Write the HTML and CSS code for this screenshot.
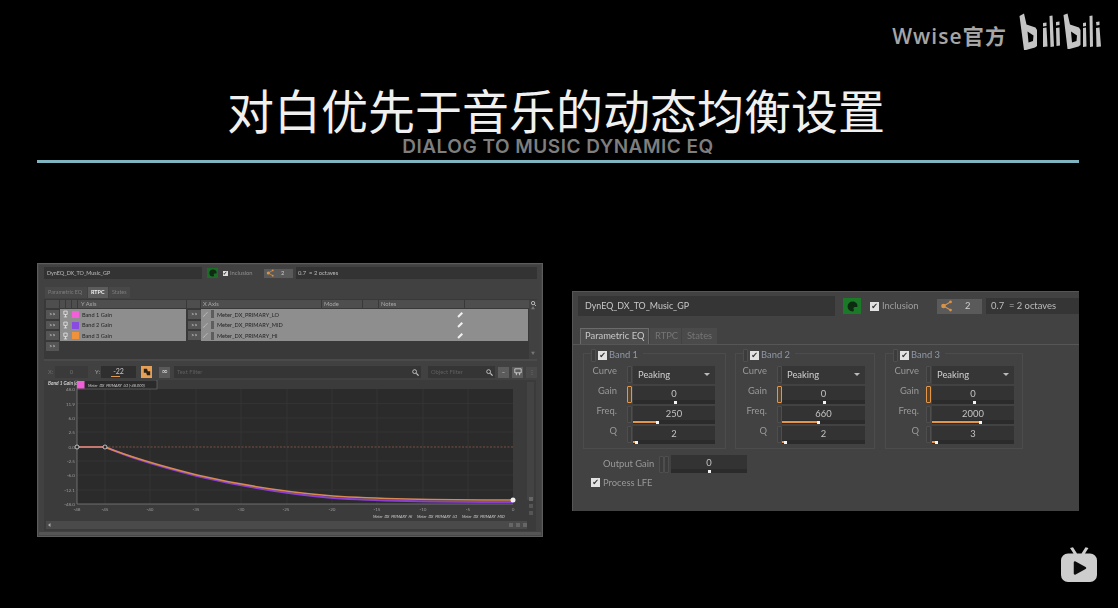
FILE: index.html
```html
<!DOCTYPE html>
<html lang="zh">
<head>
<meta charset="utf-8">
<title>对白优先于音乐的动态均衡设置</title>
<link rel="stylesheet" href="styles.css">
</head>
<body>
<main class="slide">
  <header class="brand">
    <span class="brand-name">Wwise官方</span>
    <svg class="bili" viewBox="1019 13 82 37" width="82" height="37" aria-label="bilibili">
      <g fill="#c4c4c4" fill-rule="evenodd">
        <path d="M1019.500 16l4.500-2.500 2.500 11 9 3 1.500 2.500v16l-2 1.500-9 2.500-2 0zM1027.500 31.500l1 11 4.500-1.500 .5-5.500z"/>
        <path d="M1043 23l3.500-.5v3.500l-3.500 .5zM1043 28l3.500-.5 1 19-4.500 .5z"/>
        <path d="M1049.500 16l3-.5 1.500 31-3.500 .5z"/>
        <path d="M1056 22l3.500-.5v3.500l-3.500 .5zM1056 28l3.500-.5 .5 18-3.500 .5z"/>
        <path d="M1063.500 15l4-1.500 2.500 11 9 3 1.500 2.500v15l-2 1.500-9 2.500-2 0zM1071 31.500l1 11 4.500-1.500 .5-5.500z"/>
        <path d="M1083 23l3-.5v3.500l-3 .5zM1083 28l3-.5 .5 19-3.500 .5z"/>
        <path d="M1089.500 16l3-.5 .5 31-3 .5z"/>
        <path d="M1096 22l3.500-.5v3.500l-3 .5zM1096 28l3.500-.5 1.500 19-4.500 .5z"/>
      </g>
    </svg>
  </header>
  <h1 class="title">对白优先于音乐的动态均衡设置</h1>
  <p class="subtitle">DIALOG TO MUSIC DYNAMIC EQ</p>
  <div class="rule"></div>

  <div class="shots">
    <!-- Left: RTPC window -->
    <section class="win win-rtpc">
      <div class="top-a">
        <div class="name-a">DynEQ_DX_TO_Music_GP</div>
        <span class="green-a"><svg viewBox="0 0 10 10" width="8" height="8"><path fill="#0d2b10" d="M5 .5a4.500 4.500 0 1 0 0 9c1.500 0 1.500-1.500 1-2.200-.5-1 .3-1.800 1.300-1.800H9c.5 0 .5-.5.5-1C9.500 2 7.500 .5 5 .5z"/></svg></span>
        <span class="check-a">✔</span><span class="incl-a">Inclusion</span>
        <span class="share-a"><svg viewBox="0 0 12 10" width="9" height="8"><path fill="none" stroke="#d9924a" d="M9 1.500 3 5l6 3.500"/><circle cx="3" cy="5" r="2" fill="#d9924a"/><circle cx="9" cy="1.500" r="1.200" fill="#d9924a"/><circle cx="9" cy="8.500" r="1.200" fill="#d9924a"/></svg><b>2</b></span>
        <div class="oct-a">0.7 &nbsp;= 2 octaves</div>
      </div>
      <nav class="tabs-a">
        <span>Parametric EQ</span><span class="on">RTPC</span><span>States</span>
      </nav>
      <div class="table-wrap">
        <div class="tbl">
          <div class="thead">
            <i class="c16"></i><i class="c5"></i><i class="c5"></i><i class="c6"></i><i class="c-y">Y Axis</i>
            <i class="c-gap"></i><i class="c-x">X Axis</i><i class="c-mode">Mode</i><i class="c-s"></i><i class="c-notes">Notes</i><i class="c-end"></i>
          </div>
          <div class="trow">
            <span class="go">&gt;&gt;</span>
            <div class="lt lt-y"><svg class="mic" viewBox="0 0 6 9" width="5" height="8"><path fill="none" stroke="#e4e4e4" d="M1 1h4v4H1zM3 5v3M1 8h4"/></svg><span class="sq s-pink"></span><span>Band 1 Gain</span></div>
            <span class="go go-x">&gt;&gt;</span>
            <div class="lt lt-x"><svg class="knob" viewBox="0 0 12 8" width="8" height="7"><path fill="none" stroke="#d8d8d8" stroke-width=".8" d="M0 7c3 0 3-5 7-6"/></svg><span class="bar"></span><span>Meter_DX_PRIMARY_LO</span><span class="pen"></span></div>
          </div>
          <div class="trow">
            <span class="go">&gt;&gt;</span>
            <div class="lt lt-y"><svg class="mic" viewBox="0 0 6 9" width="5" height="8"><path fill="none" stroke="#e4e4e4" d="M1 1h4v4H1zM3 5v3M1 8h4"/></svg><span class="sq s-violet"></span><span>Band 2 Gain</span></div>
            <span class="go go-x">&gt;&gt;</span>
            <div class="lt lt-x"><svg class="knob" viewBox="0 0 12 8" width="8" height="7"><path fill="none" stroke="#d8d8d8" stroke-width=".8" d="M0 7c3 0 3-5 7-6"/></svg><span class="bar"></span><span>Meter_DX_PRIMARY_MID</span><span class="pen"></span></div>
          </div>
          <div class="trow">
            <span class="go">&gt;&gt;</span>
            <div class="lt lt-y"><svg class="mic" viewBox="0 0 6 9" width="5" height="8"><path fill="none" stroke="#e4e4e4" d="M1 1h4v4H1zM3 5v3M1 8h4"/></svg><span class="sq s-orange"></span><span>Band 3 Gain</span></div>
            <span class="go go-x">&gt;&gt;</span>
            <div class="lt lt-x"><svg class="knob" viewBox="0 0 12 8" width="8" height="7"><path fill="none" stroke="#d8d8d8" stroke-width=".8" d="M0 7c3 0 3-5 7-6"/></svg><span class="bar"></span><span>Meter_DX_PRIMARY_HI</span><span class="pen"></span></div>
          </div>
          <div class="trow"><span class="go">&gt;&gt;</span></div>
        </div>
        <div class="vscroll"><svg viewBox="0 0 6 6" width="5" height="5"><circle cx="2.500" cy="2.500" r="2" fill="none" stroke="#ccc"/><path stroke="#ccc" d="M4 4l2 2"/></svg><span>▲</span><span class="push">▼</span></div>
      </div>
      <div class="tools">
        <span class="lbl-x">X:</span>
        <span class="in in-x">0</span>
        <span class="lbl-y">Y:</span>
        <span class="in in-y">-22<em></em></span>
        <span class="btn-or"><svg viewBox="0 0 10 10" width="8" height="8"><path fill="#2a2216" d="M1 1h4l1 3h3v5H5L4 6H1z"/></svg></span>
        <span class="btn-link">∞</span>
        <span class="filter f-text">Text Filter<svg viewBox="0 0 8 8" width="7" height="7"><circle cx="3" cy="3" r="2.200" fill="none" stroke="#ccc"/><path stroke="#ccc" stroke-width="1.400" d="M5 5l2.500 2.500"/></svg></span>
        <span class="filter f-obj">Object Filter<svg viewBox="0 0 8 8" width="7" height="7"><circle cx="3" cy="3" r="2.200" fill="none" stroke="#ccc"/><path stroke="#ccc" stroke-width="1.400" d="M5 5l2.500 2.500"/></svg></span>
        <span class="sbtn">–</span><span class="sbtn"><svg viewBox="0 0 10 10" width="8" height="8"><path fill="none" stroke="#ddd" d="M1 1h8v5H1zM3 6v3M7 6v3"/></svg></span><span class="sbtn dim">⋮</span>
      </div>
      <svg class="graph" viewBox="44 380 492 151" width="492" height="151">
        <rect x="44" y="380" width="492" height="151" fill="#3b3b3b"/>
        <rect x="77" y="389" width="436" height="115" fill="#2b2b2b"/>
        <g stroke="#373737" stroke-width=".7">
          <path d="M105 389v115M150 389v115M196 389v115M241 389v115M287 389v115M332 389v115M377 389v115M423 389v115M468 389v115"/>
          <path d="M77 403.500h436M77 418h436M77 432h436M77 461h436M77 475h436M77 490h436"/>
        </g>
        <path d="M77 389v115h436" fill="none" stroke="#888" stroke-width=".7"/>
        <path d="M105 447h408" stroke="#8d5a48" stroke-width=".8" stroke-dasharray="2 1.500" fill="none"/>
        <path d="M77 447h28C125 455 145 463 197 476 240 486 285 494 333 498 377 501 440 502 513 502" fill="none" stroke="#8a3fd0" stroke-width="2"/>
        <path d="M77 447h28C125 455 145 462 197 475 240 485 285 492 333 496 377 499 440 500 513 500" fill="none" stroke="#d98a50" stroke-width="1.600"/>
        <g fill="#2b2b2b" stroke="#ddd" stroke-width=".8"><circle cx="77" cy="447" r="2"/><circle cx="105" cy="447" r="2"/></g>
        <circle cx="513" cy="500" r="2.500" fill="#f0f0f0"/>
        <g class="axis-y" text-anchor="end">
          <text x="75" y="391">48.0</text><text x="75" y="405.500">11.9</text><text x="75" y="420">6.0</text><text x="75" y="434">2.5</text><text x="75" y="449">0.0</text><text x="75" y="463">-2.5</text><text x="75" y="477">-6.0</text><text x="75" y="492">-12.1</text><text x="75" y="506">-48.0</text>
        </g>
        <g class="axis-x" text-anchor="middle">
          <text x="77" y="511">-48</text><text x="105" y="511">-45</text><text x="150" y="511">-40</text><text x="196" y="511">-35</text><text x="241" y="511">-30</text><text x="286" y="511">-25</text><text x="332" y="511">-20</text><text x="377" y="511">-15</text><text x="423" y="511">-10</text><text x="468" y="511">-5</text><text x="513" y="511">0</text>
        </g>
        <g class="axis-m">
          <text x="373" y="518">Meter_DX_PRIMARY_HI</text><text x="417" y="518">Meter_DX_PRIMARY_LO</text><text x="462" y="518">Meter_DX_PRIMARY_MID</text>
        </g>
        <text class="axis-t" x="48" y="385">Band 1 Gain (dB)</text>
        <rect x="77" y="380" width="80" height="9" fill="#2b2b2b" stroke="#777" stroke-width=".6"/>
        <rect x="77" y="381" width="7.500" height="7.500" fill="#f05fd8"/>
        <text class="axis-m" x="88" y="387">Meter_DX_PRIMARY_LO (-48.000)</text>
        <g fill="#555"><rect x="527" y="382" width="7" height="118" fill="#434343"/><rect x="529" y="497" width="4" height="4" fill="#666"/><rect x="529" y="504" width="4" height="4"/><rect x="529" y="511" width="4" height="4"/></g>
        <rect x="46" y="521" width="481" height="8" fill="#4a4a4a"/>
        <path d="M48 525l2.500-2v4z" fill="#aaa"/>
        <g fill="#666"><rect x="509" y="523" width="4" height="4"/><rect x="516" y="523" width="4" height="4"/><rect x="523" y="523" width="4" height="4"/></g>
      </svg>
    </section>

    <!-- Right: Parametric EQ window -->
    <section class="win win-eq">
      <div class="top-b">
        <div class="name-b">DynEQ_DX_TO_Music_GP</div>
        <span class="green-b"><svg viewBox="0 0 10 10" width="11" height="11"><path fill="#0d2b10" d="M5 .5a4.500 4.500 0 1 0 0 9c1.500 0 1.500-1.500 1-2.200-.5-1 .3-1.800 1.300-1.800H9c.5 0 .5-.5.5-1C9.500 2 7.500 .5 5 .5z"/></svg></span>
        <span class="check">✔</span><span class="incl-b">Inclusion</span>
        <span class="share-b"><svg viewBox="0 0 12 10" width="14" height="12"><path fill="none" stroke="#d9924a" d="M9 1.500 3 5l6 3.500"/><circle cx="3" cy="5" r="2" fill="#d9924a"/><circle cx="9" cy="1.500" r="1.200" fill="#d9924a"/><circle cx="9" cy="8.500" r="1.200" fill="#d9924a"/></svg><b>2</b></span>
        <div class="oct-b">0.7 &nbsp;= 2 octaves</div>
      </div>
      <nav class="tabs-b">
        <span class="on">Parametric EQ</span><span>RTPC</span><span>States</span>
      </nav>
      <div class="pane">
        <div class="bands">
          <div class="band b1">
            <div class="band-head"><span class="grip"></span><span class="check">✔</span><span>Band 1</span></div>
            <div class="brow"><label>Curve</label><span class="grip"></span><div class="ctl sel"><span>Peaking</span><i class="caret"></i></div></div>
            <div class="brow"><label>Gain</label><span class="grip hot"></span><div class="ctl"><span>0</span><div class="track"><u class="dot mid"></u></div></div></div>
            <div class="brow"><label>Freq.</label><span class="grip"></span><div class="ctl"><span>250</span><div class="track"><s class="fill w28"></s><u class="dot"></u></div></div></div>
            <div class="brow"><label>Q</label><span class="grip"></span><div class="ctl"><span>2</span><div class="track"><s class="fill w2"></s><u class="dot"></u></div></div></div>
          </div>
          <div class="band b2">
            <div class="band-head"><span class="grip"></span><span class="check">✔</span><span>Band 2</span></div>
            <div class="brow"><label>Curve</label><span class="grip"></span><div class="ctl sel"><span>Peaking</span><i class="caret"></i></div></div>
            <div class="brow"><label>Gain</label><span class="grip hot"></span><div class="ctl"><span>0</span><div class="track"><u class="dot mid"></u></div></div></div>
            <div class="brow"><label>Freq.</label><span class="grip"></span><div class="ctl"><span>660</span><div class="track"><s class="fill w43"></s><u class="dot"></u></div></div></div>
            <div class="brow"><label>Q</label><span class="grip"></span><div class="ctl"><span>2</span><div class="track"><s class="fill w2"></s><u class="dot"></u></div></div></div>
          </div>
          <div class="band b3">
            <div class="band-head"><span class="grip"></span><span class="check">✔</span><span>Band 3</span></div>
            <div class="brow"><label>Curve</label><span class="grip"></span><div class="ctl sel"><span>Peaking</span><i class="caret"></i></div></div>
            <div class="brow"><label>Gain</label><span class="grip hot"></span><div class="ctl"><span>0</span><div class="track"><u class="dot mid"></u></div></div></div>
            <div class="brow"><label>Freq.</label><span class="grip"></span><div class="ctl"><span>2000</span><div class="track"><s class="fill w57"></s><u class="dot"></u></div></div></div>
            <div class="brow"><label>Q</label><span class="grip"></span><div class="ctl"><span>3</span><div class="track"><s class="fill w3"></s><u class="dot"></u></div></div></div>
          </div>
        </div>
        <div class="out-row">
          <label>Output Gain</label><span class="grip"></span><span class="grip"></span>
          <div class="ctl"><span>0</span><div class="track"><u class="dot mid"></u></div></div>
        </div>
        <div class="lfe-row"><span class="check">✔</span><span>Process LFE</span></div>
      </div>
    </section>
  </div>

  <svg class="tv" viewBox="0 0 38 36" width="38" height="36">
    <path fill="#cdcdcd" d="M10 1l3-.8 4 6.300h4.500l4-6.300 3 .8-3.500 5.500H30a7 7 0 0 1 7 7V28a7 7 0 0 1-7 7H8a7 7 0 0 1-7-7V13.500a7 7 0 0 1 7-7h5.500z"/>
    <path fill="#0c0c0c" stroke="#0c0c0c" stroke-width="2.500" stroke-linejoin="round" d="M15 15.500l10 5.500-10 5.500z"/>
  </svg>
</main>
</body>
</html>
```
FILE: styles.css
```css
* { box-sizing: border-box; }
html, body { margin: 0; padding: 0; background: #000; }
body { width: 1118px; height: 608px; overflow: hidden; font-family: Lato, "Noto Sans CJK SC", sans-serif; }
.slide { position: relative; width: 1118px; height: 608px; padding: 13px 39px 0 37px; display: flex; flex-direction: column; }

.brand { height: 37px; margin-right: -22px; display: flex; justify-content: flex-end; align-items: center; gap: 12px; }
.brand-name { font: 600 21px/37px "Open Sans", "Noto Sans CJK SC", sans-serif; letter-spacing: 1.100px; color: #a6a6a6; margin-top: 9px; }
.bili { display: block; }
.title { margin: 31px 4px 0 0; text-align: center; font: 400 47px/56px "Noto Sans CJK SC", sans-serif; color: #f0f0f0; height: 56px; }
.subtitle { margin: -2px 0 0; height: 24px; text-align: center; font: 600 19px/24px Inter, sans-serif; color: #7e7e7e; letter-spacing: .5px; white-space: nowrap; }
.rule { height: 3px; margin-top: 1px; background: #7fb4c0; }

.shots { display: flex; align-items: flex-start; gap: 29px; margin-top: 100px; }
.win { filter: blur(.45px); color: #bbb; }

/* ---------- Left window ---------- */
.win-rtpc { width: 506px; height: 274px; background: #414141; border: 1px solid #5c5c5c; box-shadow: inset 0 0 0 1px #474747, inset 0 -4px 0 #555; padding: 3px 5px 0 6px; font-size: 5.800px; line-height: 1; }
.top-a { display: flex; align-items: center; height: 12px; }
.name-a { width: 158px; height: 12px; background: #333; color: #bdbdbd; line-height: 12px; padding-left: 3px; font-size: 5.400px; }
.green-a { width: 11px; height: 10px; margin-left: 5px; background: #1c6b26; display: flex; align-items: center; justify-content: center; }
.check-a { width: 5px; height: 5px; margin-left: 5px; background: #ddd; color: #333; font: 5px/5px "DejaVu Sans", sans-serif; }
.incl-a { margin-left: 2px; width: 34px; color: #8f8f8f; }
.share-a { width: 29px; height: 9px; background: #5a5a5a; display: flex; align-items: center; gap: 6px; padding-left: 2px; color: #ccc; }
.share-a b { font-weight: 400; }
.oct-a { flex: 1; height: 12px; margin-left: 3px; background: #333; line-height: 12px; padding-left: 2px; }

.tabs-a { display: flex; height: 11px; margin-top: 8px; margin-left: 1px; color: #7e7e7e; font-size: 5.400px; }
.tabs-a span { padding: 0 3px; line-height: 11px; background: #484848; margin-right: 1px; white-space: nowrap; }
.tabs-a span:first-child { width: 42px; }
.tabs-a .on { background: #5c5c5c; color: #f0f0f0; font-weight: 700; width: 20px; }
.tabs-a span:last-child { width: 21px; }

.table-wrap { display: flex; height: 62px; margin-top: 1px; padding-top: 1px; background: #393939; border-bottom: 2px solid #4a4a4a; }
.tbl { flex: 1; padding-left: 2px; }
.thead { display: flex; height: 8px; gap: 1px; margin-bottom: 1px; }
.thead i { font-style: normal; background: #4e4e4e; line-height: 8px; color: #a8a8a8; padding-left: 2px; }
.c16 { width: 13px; } .c5 { width: 5px; } .c6 { width: 5px; }
.thead .c-y { width: 108px; padding-left: 3px; }
.c-gap { width: 13px; }
.c-x { width: 120px; }
.c-mode { width: 40px; } .c-s { width: 15px; } .c-notes { width: 85px; } .c-end { flex: 1; }
.trow { display: grid; grid-template-columns: 14px 126px 15px 327px; height: 10.700px; align-items: stretch; color: #242424; }
.go { width: 13px; height: 8.500px; background: #555; color: #ddd; font-size: 5px; line-height: 8.500px; text-align: center; letter-spacing: .3px; margin-top: 1px; }
.go-x { margin-left: 2px; }
.lt { background: #8e8e8e; display: flex; align-items: center; white-space: nowrap; font-size: 5.600px; }
.lt-y { padding-left: 3px; }
.lt-x { padding-left: 2px; }
.sq { width: 7px; height: 7px; margin: 0 3px 0 4px; }
.s-pink { background: #f25fd9; } .s-violet { background: #8a4be0; } .s-orange { background: #f0923c; }
.bar { width: 3px; height: 8px; background: #5d5d5d; margin: 0 3px 0 0; }
.pen { margin-left: auto; margin-right: 65px; width: 6px; height: 1.500px; background: #f0f0f0; transform: rotate(-45deg); }
.vscroll { width: 8px; background: #414141; display: flex; flex-direction: column; align-items: center; gap: 1px; font-size: 4px; color: #777; padding: 1px 0 3px; }
.vscroll .push { margin-top: auto; }

.tools { display: flex; align-items: center; height: 12px; margin-top: 5px; color: #6f6f6f; }
.lbl-x { width: 5px; margin-left: 4px; }
.in { height: 12px; background: #3a3a3a; text-align: center; line-height: 11px; position: relative; }
.in-x { width: 33px; margin-left: 2px; }
.lbl-y { margin-left: 7px; width: 6px; color: #aaa; }
.in-y { width: 35px; background: #2f2f2f; color: #c5c5c5; font-size: 7px; }
.in-y em { position: absolute; left: 10px; bottom: 1px; width: 9px; height: 1px; background: #e09a50; }
.btn-or { width: 11px; height: 12px; margin-left: 5px; background: #e6a055; display: flex; align-items: center; justify-content: center; }
.btn-link { width: 11px; height: 11px; margin-left: 7px; background: #5a5a5a; color: #ddd; text-align: center; font: 8px/10px "DejaVu Sans", sans-serif; }
.filter { height: 12px; background: #353535; display: flex; align-items: center; justify-content: space-between; padding: 0 2px 0 3px; color: #5f5f5f; }
.f-text { width: 247px; margin-left: 4px; }
.f-obj { width: 67px; margin-left: 7px; }
.sbtn { width: 11px; height: 11px; margin-left: 3px; background: #5c5c5c; color: #ddd; display: flex; align-items: center; justify-content: center; }
.sbtn.dim { background: #4a4a4a; color: #777; }

.graph { display: block; margin-top: 2px; }
.graph text { font-family: Lato, sans-serif; }
.axis-y, .axis-x { font-size: 4.600px; fill: #9a9a9a; }
.axis-m { font-size: 3.900px; fill: #cfcfcf; font-style: italic; }
.axis-t { font-size: 4.800px; fill: #cfcfcf; font-style: italic; font-weight: 700; }

/* ---------- Right window ---------- */
.win-eq { width: 507px; height: 220px; margin-top: 28px; background: #424242; border-top: 1px solid #565656; border-left: 1px solid #565656; padding: 4px 0 0 5px; font-size: 9.400px; line-height: 1; }
.top-b { display: flex; align-items: center; height: 20px; }
.name-b { width: 257px; height: 20px; background: #353535; color: #c8c8c8; padding-left: 7px; line-height: 20px; font-size: 8.900px; }
.green-b { width: 18px; height: 16px; margin-left: 8px; background: #1a7a28; display: flex; align-items: center; justify-content: center; }
.check { width: 9px; height: 9px; background: #e2e2e2; color: #333; font: 8px/9px "DejaVu Sans", sans-serif; text-align: center; flex: none; display: inline-block; }
.top-b .check { margin-left: 9px; }
.incl-b { margin-left: 3px; width: 55px; color: #9e9e9e; }
.share-b { width: 45px; height: 15px; background: #5a5a5a; display: flex; align-items: center; gap: 11px; padding-left: 3px; color: #d0d0d0; }
.share-b b { font-weight: 400; }
.oct-b { flex: 1; height: 16px; margin-left: 4px; background: #353535; line-height: 16px; padding-left: 5px; color: #bdbdbd; }

.tabs-b { display: flex; height: 16px; margin-top: 12px; margin-left: 2px; color: #767676; }
.tabs-b span { padding: 0 5px; line-height: 16px; background: #4a4a4a; margin-right: 1px; white-space: nowrap; }
.tabs-b span:nth-child(2) { width: 31px; }
.tabs-b span:nth-child(3) { width: 35px; }
.tabs-b .on { width: 69px; background: #4d4d4d; box-shadow: inset 0 1px 0 #6b6b6b, inset 1px 0 0 #6b6b6b, inset -1px 0 0 #6b6b6b; color: #c8c8c8; }
.pane { border-top: 1px solid #565656; margin-left: -5px; padding: 8px 0 0 10px; }
.bands { display: flex; }
.band { height: 96px; border: 1px solid #4c4c4c; }
.b1 { width: 143px; margin-right: 9px; }
.b2 { width: 140px; margin-right: 10px; }
.b3 { width: 138px; }
.band-head { display: flex; align-items: center; gap: 2px; height: 12px; margin: -5px 0 0 7px; width: max-content; background: #424242; padding-right: 5px; color: #8f98a8; }
.band-head .grip { height: 13px; }
.band-head + .brow { margin-top: 5px; }
.brow { display: grid; grid-template-columns: 33px 16px 82px; align-items: start; height: 18px; margin-top: 2px; }
.brow label { text-align: right; color: #999; line-height: 10px; }
.brow .grip { margin-left: 10px; }
.b2 .brow { grid-template-columns: 31px 15px 83px; }
.b3 .brow { grid-template-columns: 33px 13px 82px; }
.b3 .brow .grip { margin-left: 7px; }
.grip { width: 5px; height: 17px; border: 1px solid #4e4e4e; border-radius: 1px; background: #3c3c3c; display: block; flex: none; }
.grip.hot { border-color: #e2964a; background: #58432d; border-width: 1.500px; }
.ctl { position: relative; height: 18px; background: #333; color: #c4c4c4; text-align: center; line-height: 15px; }
.sel { display: flex; justify-content: space-between; align-items: center; padding: 0 5px 2px; background: #363636; color: #d0d0d0; }
.caret { width: 0; height: 0; border: 3px solid transparent; border-top: 3px solid #bbb; margin-top: 3px; }
.track { position: absolute; left: 0; right: 0; bottom: 0; height: 4px; background: #2b2b2b; display: flex; align-items: center; }
.fill { display: block; height: 1.500px; background: #e2964a; }
.w28 { width: 23px; } .w43 { width: 35px; } .w57 { width: 47px; } .w2 { width: 2px; } .w3 { width: 3px; }
.dot { display: block; width: 3px; height: 3px; background: #f2f2f2; }
.dot.mid { margin-left: 41px; }
.out-row { display: flex; align-items: center; margin-top: 6px; height: 18px; }
.out-row label { width: 56px; margin-left: 20px; color: #999; white-space: nowrap; }
.out-row .grip + .grip { margin-right: 2px; }
.out-row .ctl { width: 76px; }
.out-row .dot.mid { margin-left: 37px; }
.lfe-row { display: flex; align-items: center; gap: 3px; margin: 4px 0 0 8px; height: 11px; color: #999; }

/* ---------- Player mark ---------- */
.tv { position: absolute; left: 1060px; top: 547px; }
```
